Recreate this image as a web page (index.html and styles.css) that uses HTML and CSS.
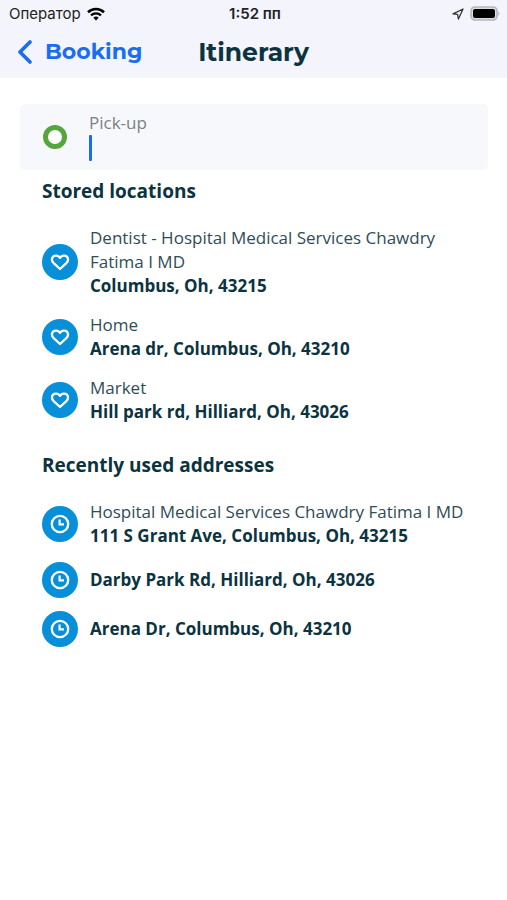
FILE: index.html
```
<!DOCTYPE html>
<html lang="en">
<head>
    <meta charset="UTF-8">
    <meta name="viewport" content="width=device-width, initial-scale=1.0">
    <title>Itinerary</title>
    <link rel="stylesheet" href="styles.css">
</head>
<body>
    <svg class="sprite" aria-hidden="true">
        <symbol id="icon-heart" viewBox="0 0 20 20">
            <path d="M10 17 L3.4 10.8 C1.5 8.9 1.5 6.2 3.1 4.7 C4.9 3 8.2 3.2 10 5.8 C11.8 3.2 15.1 3 16.9 4.7 C18.5 6.2 18.5 8.9 16.6 10.8 Z" fill="none" stroke="currentColor" stroke-width="2.3" stroke-linejoin="round"/>
        </symbol>
        <symbol id="icon-clock" viewBox="0 0 20 20">
            <circle cx="10" cy="10" r="8.2" fill="none" stroke="currentColor" stroke-width="2.3"/>
            <path d="M9.6 5.5 V10.3 H14" fill="none" stroke="currentColor" stroke-width="2.2"/>
        </symbol>
    </svg>

    <header class="header">
        <div class="status-bar">
            <div class="carrier">
                <span>Оператор</span>
                <svg class="wifi" viewBox="0 0 18 14" aria-hidden="true">
                    <path d="M1 5.2 A11.5 11.5 0 0 1 17 5.2" fill="none" stroke="#000" stroke-width="2.6"/>
                    <path d="M4 8.4 A7.2 7.2 0 0 1 14 8.4" fill="none" stroke="#000" stroke-width="2.3"/>
                    <path d="M9 13.6 L6.3 10.8 A3.9 3.9 0 0 1 11.7 10.8 Z"/>
                </svg>
            </div>
            <span class="time">1:52 пп</span>
            <div class="indicators">
                <svg class="location" viewBox="0 0 12 12" aria-hidden="true">
                    <path d="M11 1 L1 5.8 L5.6 6.4 L6.4 11 Z" fill="none" stroke="#333" stroke-width="1.3" stroke-linejoin="round"/>
                </svg>
                <svg class="battery" viewBox="0 0 31 15" aria-hidden="true">
                    <rect x="1" y="1" width="26" height="13" rx="4" fill="#dcdde3" stroke="#b5b6ba" stroke-width="1.6"/>
                    <rect x="3" y="3" width="22" height="9" rx="2"/>
                    <path d="M28.3 5 Q30.5 7.5 28.3 10 Z" fill="#b5b6ba"/>
                </svg>
            </div>
        </div>
        <nav class="nav-bar">
            <a class="back" href="#">
                <svg class="chevron" viewBox="0 0 16 26" aria-hidden="true">
                    <path d="M14 3 L4 13 L14 23" fill="none" stroke="currentColor" stroke-width="3.6" stroke-linecap="round" stroke-linejoin="round"/>
                </svg>
                Booking
            </a>
            <h1>Itinerary</h1>
        </nav>
    </header>

    <main>
        <div class="pickup">
            <span class="ring"></span>
            <div class="pickup-field">
                <label for="pickup">Pick-up</label>
                <div class="pickup-input">
                    <span class="caret"></span>
                    <input type="text" id="pickup">
                </div>
            </div>
        </div>

        <section class="locations">
            <h2>Stored locations</h2>
            <ul>
                <li>
                    <span class="badge"><svg><use href="#icon-heart"/></svg></span>
                    <div class="address">
                        <p>Dentist - Hospital Medical Services Chawdry Fatima I MD</p>
                        <strong>Columbus, Oh, 43215</strong>
                    </div>
                </li>
                <li>
                    <span class="badge"><svg><use href="#icon-heart"/></svg></span>
                    <div class="address">
                        <p>Home</p>
                        <strong>Arena dr, Columbus, Oh, 43210</strong>
                    </div>
                </li>
                <li>
                    <span class="badge"><svg><use href="#icon-heart"/></svg></span>
                    <div class="address">
                        <p>Market</p>
                        <strong>Hill park rd, Hilliard, Oh, 43026</strong>
                    </div>
                </li>
            </ul>
        </section>

        <section class="locations">
            <h2>Recently used addresses</h2>
            <ul>
                <li>
                    <span class="badge"><svg><use href="#icon-clock"/></svg></span>
                    <div class="address">
                        <p>Hospital Medical Services Chawdry Fatima I MD</p>
                        <strong>111 S Grant Ave, Columbus, Oh, 43215</strong>
                    </div>
                </li>
                <li>
                    <span class="badge"><svg><use href="#icon-clock"/></svg></span>
                    <div class="address">
                        <strong>Darby Park Rd, Hilliard, Oh, 43026</strong>
                    </div>
                </li>
                <li>
                    <span class="badge"><svg><use href="#icon-clock"/></svg></span>
                    <div class="address">
                        <strong>Arena Dr, Columbus, Oh, 43210</strong>
                    </div>
                </li>
            </ul>
        </section>
    </main>
</body>
</html>
```
FILE: styles.css
```
* {
    margin: 0;
    padding: 0;
    box-sizing: border-box;
}

body {
    font-family: "Open Sans", "Noto Sans", sans-serif;
    font-size: 17px;
    line-height: 24px;
    color: #0b3340;
    background-color: #fff;
}

.sprite {
    display: none;
}

.header {
    background-color: #f3f4fc;
    padding-bottom: 2px;
}

.status-bar {
    display: grid;
    grid-template-columns: 1fr auto 1fr;
    align-items: center;
    height: 27px;
    padding: 0 6px 0 9px;
    font-family: Inter, sans-serif;
    font-size: 15px;
    color: #222;
}

.carrier,
.indicators {
    display: flex;
    align-items: center;
    gap: 6px;
}

.indicators {
    justify-content: flex-end;
}

.time {
    font-weight: 600;
}

.wifi {
    width: 18px;
    height: 14px;
}

.location {
    width: 12px;
    height: 12px;
}

.battery {
    width: 31px;
    height: 15px;
}

.nav-bar {
    display: grid;
    grid-template-columns: 1fr auto 1fr;
    align-items: center;
    height: 49px;
    padding: 0 16px;
    font-family: Montserrat, Inter, sans-serif;
}

.back {
    display: flex;
    align-items: center;
    gap: 13px;
    color: #1a6df0;
    font-size: 22px;
    font-weight: 700;
    text-decoration: none;
}

.chevron {
    width: 16px;
    height: 26px;
}

h1 {
    font-size: 25px;
    font-weight: 700;
}

main {
    padding: 26px 19px 20px 20px;
}

.pickup {
    display: flex;
    align-items: center;
    gap: 22px;
    padding: 7px 23px;
    background-color: #f6f8fc;
    border-radius: 5px;
}

.ring {
    width: 24px;
    height: 24px;
    border: 5px solid #55a63c;
    border-radius: 50%;
    background-color: #fff;
}

.pickup-field {
    flex: 1;
}

.pickup-field label {
    display: block;
    color: #7d7f82;
}

.pickup-input {
    display: flex;
    height: 28px;
}

.caret {
    width: 3px;
    height: 26px;
    border-radius: 1px;
    background-color: #1a6df0;
}

.pickup-input input {
    flex: 1;
    min-width: 0;
    border: none;
    outline: none;
    background: none;
    font: inherit;
    color: inherit;
}

.locations {
    padding: 9px 0 20px 22px;
}

h2 {
    margin-bottom: 23px;
    font-size: 19px;
    font-weight: 700;
}

ul {
    display: flex;
    flex-direction: column;
    gap: 15px;
    list-style: none;
}

li {
    display: flex;
    align-items: center;
    gap: 12px;
}

.badge {
    display: flex;
    align-items: center;
    justify-content: center;
    flex: none;
    width: 36px;
    height: 36px;
    margin: -1px 0;
    border-radius: 50%;
    background-color: #078fd9;
    color: #fff;
}

.badge svg {
    width: 20px;
    height: 20px;
}

.address {
    flex: 1;
}

.address p {
    color: #2f4c58;
}

.address strong {
    display: block;
    font-weight: 700;
}
```
